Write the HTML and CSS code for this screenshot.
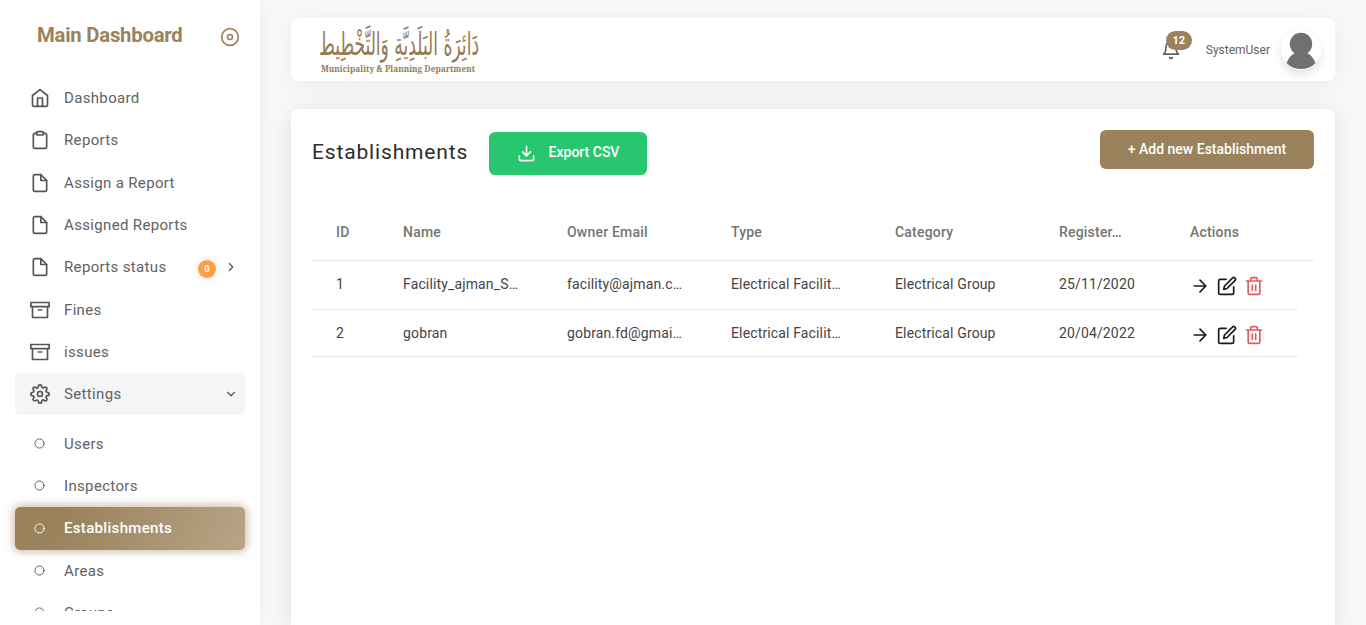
FILE: index.html
```
<!DOCTYPE html>
<html lang="en">
<head>
<meta charset="utf-8">
<title>Establishments</title>
<link rel="stylesheet" href="styles.css">
</head>
<body>
<svg class="defs" aria-hidden="true">
  <symbol id="home" viewBox="0 0 24 24"><path d="M3 9l9-7 9 7v11a2 2 0 0 1-2 2H5a2 2 0 0 1-2-2z"/><path d="M9 22V12h6v10"/></symbol>
  <symbol id="clipboard" viewBox="0 0 24 24"><path d="M16 4h2a2 2 0 0 1 2 2v14a2 2 0 0 1-2 2H6a2 2 0 0 1-2-2V6a2 2 0 0 1 2-2h2"/><rect x="8" y="2" width="8" height="4" rx="1"/></symbol>
  <symbol id="file" viewBox="0 0 24 24"><path d="M13 2H6a2 2 0 0 0-2 2v16a2 2 0 0 0 2 2h12a2 2 0 0 0 2-2V9z"/><path d="M13 2v7h7"/></symbol>
  <symbol id="archive" viewBox="0 0 24 24"><path d="M21 8v13H3V8"/><rect x="1" y="3" width="22" height="5"/><path d="M10 12h4"/></symbol>
  <symbol id="settings" viewBox="0 0 24 24"><circle cx="12" cy="12" r="3"/><path d="M19.4 15a1.65 1.65 0 0 0 .33 1.82l.06.06a2 2 0 0 1 0 2.83 2 2 0 0 1-2.83 0l-.06-.06a1.65 1.65 0 0 0-1.82-.33 1.65 1.65 0 0 0-1 1.51V21a2 2 0 0 1-2 2 2 2 0 0 1-2-2v-.09A1.65 1.65 0 0 0 9 19.4a1.65 1.65 0 0 0-1.82.33l-.06.06a2 2 0 0 1-2.83 0 2 2 0 0 1 0-2.83l.06-.06a1.65 1.65 0 0 0 .33-1.82 1.65 1.65 0 0 0-1.51-1H3a2 2 0 0 1-2-2 2 2 0 0 1 2-2h.09A1.65 1.65 0 0 0 4.6 9a1.65 1.65 0 0 0-.33-1.82l-.06-.06a2 2 0 0 1 0-2.83 2 2 0 0 1 2.83 0l.06.06a1.65 1.65 0 0 0 1.82.33H9a1.65 1.65 0 0 0 1-1.51V3a2 2 0 0 1 2-2 2 2 0 0 1 2 2v.09a1.65 1.65 0 0 0 1 1.51 1.65 1.65 0 0 0 1.82-.33l.06-.06a2 2 0 0 1 2.83 0 2 2 0 0 1 0 2.83l-.06.06a1.65 1.65 0 0 0-.33 1.82V9a1.65 1.65 0 0 0 1.51 1H21a2 2 0 0 1 2 2 2 2 0 0 1-2 2h-.09a1.65 1.65 0 0 0-1.51 1z"/></symbol>
  <symbol id="circle" viewBox="0 0 24 24"><circle cx="12" cy="12" r="10"/></symbol>
  <symbol id="disc" viewBox="0 0 24 24"><circle cx="12" cy="12" r="10"/><circle cx="12" cy="12" r="3"/></symbol>
  <symbol id="chev" viewBox="0 0 24 24"><path d="M9 18l6-6-6-6"/></symbol>
  <symbol id="chevdown" viewBox="0 0 24 24"><path d="M6 9l6 6 6-6"/></symbol>
  <symbol id="bell" viewBox="0 0 24 24"><path d="M18 8A6 6 0 0 0 6 8c0 7-3 9-3 9h18s-3-2-3-9"/><path d="M13.73 21a2 2 0 0 1-3.46 0"/></symbol>
  <symbol id="download" viewBox="0 0 24 24"><path d="M21 15v4a2 2 0 0 1-2 2H5a2 2 0 0 1-2-2v-4M7 10l5 5 5-5M12 15V3"/></symbol>
  <symbol id="arrow" viewBox="0 0 24 24"><path d="M5 12h14M12 5l7 7-7 7"/></symbol>
  <symbol id="edit" viewBox="0 0 24 24"><path d="M11 4H4a2 2 0 0 0-2 2v14a2 2 0 0 0 2 2h14a2 2 0 0 0 2-2v-7"/><path d="M18.5 2.5a2.12 2.12 0 0 1 3 3L12 15l-4 1 1-4z"/></symbol>
  <symbol id="trash" viewBox="0 0 24 24"><path d="M3 6h18M19 6v14a2 2 0 0 1-2 2H7a2 2 0 0 1-2-2V6M8 6V4a2 2 0 0 1 2-2h4a2 2 0 0 1 2 2v2M10 11v6M14 11v6"/></symbol>
</svg>

<aside class="sidebar">
  <div class="brand"><span class="brand-name">Main Dashboard</span><svg class="icon brand-toggle"><use href="#disc"/></svg></div>
  <nav class="menu">
    <a class="item"><svg class="icon"><use href="#home"/></svg><span>Dashboard</span></a>
    <a class="item"><svg class="icon"><use href="#clipboard"/></svg><span>Reports</span></a>
    <a class="item"><svg class="icon"><use href="#file"/></svg><span>Assign a Report</span></a>
    <a class="item"><svg class="icon"><use href="#file"/></svg><span>Assigned Reports</span></a>
    <a class="item"><svg class="icon"><use href="#file"/></svg><span>Reports status</span><b class="count">0</b><svg class="icon chevron"><use href="#chev"/></svg></a>
    <a class="item"><svg class="icon"><use href="#archive"/></svg><span>Fines</span></a>
    <a class="item"><svg class="icon"><use href="#archive"/></svg><span>issues</span></a>
    <a class="item open"><svg class="icon"><use href="#settings"/></svg><span>Settings</span><svg class="icon chevron"><use href="#chevdown"/></svg></a>
    <div class="submenu">
      <a class="item"><svg class="icon dot"><use href="#circle"/></svg><span>Users</span></a>
      <a class="item"><svg class="icon dot"><use href="#circle"/></svg><span>Inspectors</span></a>
      <a class="item active"><svg class="icon dot"><use href="#circle"/></svg><span>Establishments</span></a>
      <a class="item"><svg class="icon dot"><use href="#circle"/></svg><span>Areas</span></a>
      <a class="item"><svg class="icon dot"><use href="#circle"/></svg><span>Groups</span></a>
    </div>
  </nav>
</aside>

<main class="content">
  <header class="topbar">
    <svg class="logo" viewBox="0 0 166 54">
      <text class="logo-ar" transform="translate(83 32) scale(1 1.75)" text-anchor="middle" direction="rtl" textLength="160" lengthAdjust="spacingAndGlyphs">دَائِرَةُ البَلَدِيَّةِ وَالتَّخْطِيط</text>
      <text class="logo-en" x="5" y="49" textLength="154" lengthAdjust="spacingAndGlyphs">Municipality &amp; Planning Department</text>
    </svg>
    <div class="account">
      <div class="bell"><svg class="icon"><use href="#bell"/></svg><b class="bell-count">12</b></div>
      <span class="user">SystemUser</span>
      <svg class="avatar" viewBox="0 0 40 40"><circle cx="20" cy="20" r="20" fill="#fff"/><circle cx="20" cy="14" r="11.2" fill="#707070"/><path d="M5.500 33Q9 24.500 15 22.500H25Q31 24.500 34.500 33Q29 39 20 39T5.500 33z" fill="#707070"/></svg>
    </div>
  </header>

  <section class="card">
    <div class="toolbar">
      <h1 class="title">Establishments</h1>
      <button class="btn export"><svg class="icon"><use href="#download"/></svg><span>Export CSV</span></button>
      <button class="btn add">+ Add new Establishment</button>
    </div>
    <div class="table">
      <div class="row head"><span>ID</span><span>Name</span><span>Owner Email</span><span>Type</span><span>Category</span><span>Register…</span><span>Actions</span></div>
      <div class="row"><span>1</span><span>Facility_ajman_S…</span><span>facility@ajman.c…</span><span>Electrical Facilit…</span><span>Electrical Group</span><span>25/11/2020</span>
        <div class="actions"><svg class="icon"><use href="#arrow"/></svg><svg class="icon"><use href="#edit"/></svg><svg class="icon danger"><use href="#trash"/></svg></div></div>
      <div class="row last"><span>2</span><span>gobran</span><span>gobran.fd@gmai…</span><span>Electrical Facilit…</span><span>Electrical Group</span><span>20/04/2022</span>
        <div class="actions"><svg class="icon"><use href="#arrow"/></svg><svg class="icon"><use href="#edit"/></svg><svg class="icon danger"><use href="#trash"/></svg></div></div>
    </div>
  </section>
</main>
</body>
</html>
```
FILE: styles.css
```
* { box-sizing: border-box; }
body {
  margin: 0;
  height: 625px;
  display: flex;
  overflow: hidden;
  background: #f8f8f8;
  color: #626262;
  font-family: Roboto, "Liberation Sans", sans-serif;
  font-size: 14px;
}
.defs { display: none; }
.icon {
  width: 20px;
  height: 20px;
  flex: none;
  fill: none;
  stroke: currentColor;
  stroke-width: 2;
  stroke-linecap: round;
  stroke-linejoin: round;
}

/* Sidebar */
.sidebar {
  width: 260px;
  height: 625px;
  flex: none;
  background: #fff;
  box-shadow: 0 0 15px rgba(0, 0, 0, .05);
}
.brand {
  height: 77px;
  padding: 23px 20px 0 37px;
  display: flex;
  align-items: flex-start;
  justify-content: space-between;
  color: #99825c;
}
.brand-name { font-size: 20.3px; line-height: 24px; font-weight: 700; letter-spacing: -.22px; }
.brand-toggle { margin-top: 4px; }
.menu { height: 534px; padding: 0 15px; overflow: hidden; }
.item {
  height: 42.3px;
  padding: 0 7px 0 15px;
  display: flex;
  align-items: center;
  border-radius: 5px;
  font-size: 15px;
  letter-spacing: .34px;
}
.item .icon { margin-right: 14px; color: #555; }
.item .dot { width: 11px; height: 11px; margin: 0 18.5px 1px 4.5px; position: relative; left: -.3px; }
.item .chevron { width: 14px; height: 14px; margin: 0 0 0 auto; }
.open { background: #f5f5f5; }
.submenu { padding-top: 7.500px; }
.item.active {
  color: #fff;
  font-weight: 500;
  letter-spacing: .32px;
  background: linear-gradient(118deg, #99825c 20%, #b7a586);
  box-shadow: 0 0 10px 1px rgba(153, 130, 92, .6);
}
.active span { padding-bottom: 1px; }
.item.active .icon { color: #fff; }
.count {
  width: 18px;
  height: 18px;
  margin: 3px 8px 0 auto;
  border-radius: 9px;
  background: #ff9f43;
  box-shadow: 0 0 8px rgba(0, 0, 0, .14);
  color: #fff;
  font-size: 9px;
  line-height: 18px;
  text-align: center;
}
.count + .icon.chevron { margin-left: 0; }

/* Header bar */
.content { width: 1106px; height: 625px; padding: 18px 31px 0; }
.topbar {
  height: 63px;
  padding: 0 14px 0 25px;
  display: flex;
  align-items: center;
  justify-content: space-between;
  border-radius: 7px;
  background: #fff;
  box-shadow: 0 4px 24px rgba(0, 0, 0, .06);
}
.logo { width: 166px; height: 54px; overflow: visible; }
.logo-ar { fill: #957b55; font: 18px "DejaVu Sans", sans-serif; }
.logo-en { fill: #957b55; font: 700 9.5px "Noto Serif", "DejaVu Serif", serif; }
.account { display: flex; align-items: center; }
.bell { position: relative; height: 20px; margin-right: 25px; }
.bell-count {
  position: absolute;
  left: 5px;
  top: -9px;
  width: 26px;
  height: 19px;
  border-radius: 10px;
  background: #99825c;
  color: #fff;
  font-size: 11px;
  line-height: 19px;
  text-align: center;
}
.user { margin-right: 11px; font-size: 12px; }
.avatar { width: 40px; height: 40px; border-radius: 50%; box-shadow: 0 4px 8px rgba(0, 0, 0, .13); }

/* Establishments card */
.card {
  height: 516px;
  margin-top: 28px;
  padding: 21px 21px 0;
  border-radius: 7px 7px 0 0;
  background: #fff;
  box-shadow: 0 4px 25px rgba(0, 0, 0, .1);
}
.toolbar { height: 74px; display: flex; align-items: flex-start; }
.title { width: 177px; margin: 9px 0 0; color: #2c2c2c; font-size: 21px; line-height: 26px; font-weight: 400; letter-spacing: .84px; }
.btn {
  border: 0;
  border-radius: 6px;
  color: #fff;
  font: 500 14px Roboto, sans-serif;
}
.export {
  width: 158px;
  height: 43px;
  margin-top: 2px;
  padding: 0 0 3px;
  display: flex;
  align-items: center;
  justify-content: center;
  gap: 13px;
  background: #28c76f;
}
.export .icon { margin-top: 3px; width: 19px; height: 19px; }
.add { width: 214px; height: 39px; margin-left: auto; padding-bottom: 3px; background: #99825c; }
.row {
  width: 986px;
  height: 49px;
  display: grid;
  grid-template-columns: 67px 164px 164px 164px 164px 131px 132px;
  align-items: center;
  border-bottom: 1px solid #e9e9e9;
  color: #444;
  font-size: 14px;
  letter-spacing: .14px;
}
.row > * { padding-left: 24px; white-space: nowrap; }
.row > span { padding-bottom: 2px; }
.last { height: 47px; }
.row.last > span { padding-bottom: 0; }
.row.head { width: 1002px; height: 57px; color: #757575; font-weight: 500; letter-spacing: .2px; }
.row.head > span { padding-bottom: 1px; }
.actions { display: flex; align-items: center; gap: 7px; padding-top: 2px; color: #1a1a1a; }
.last .actions { padding-top: 4px; }
.row .danger { color: #e35b5b; }
```
